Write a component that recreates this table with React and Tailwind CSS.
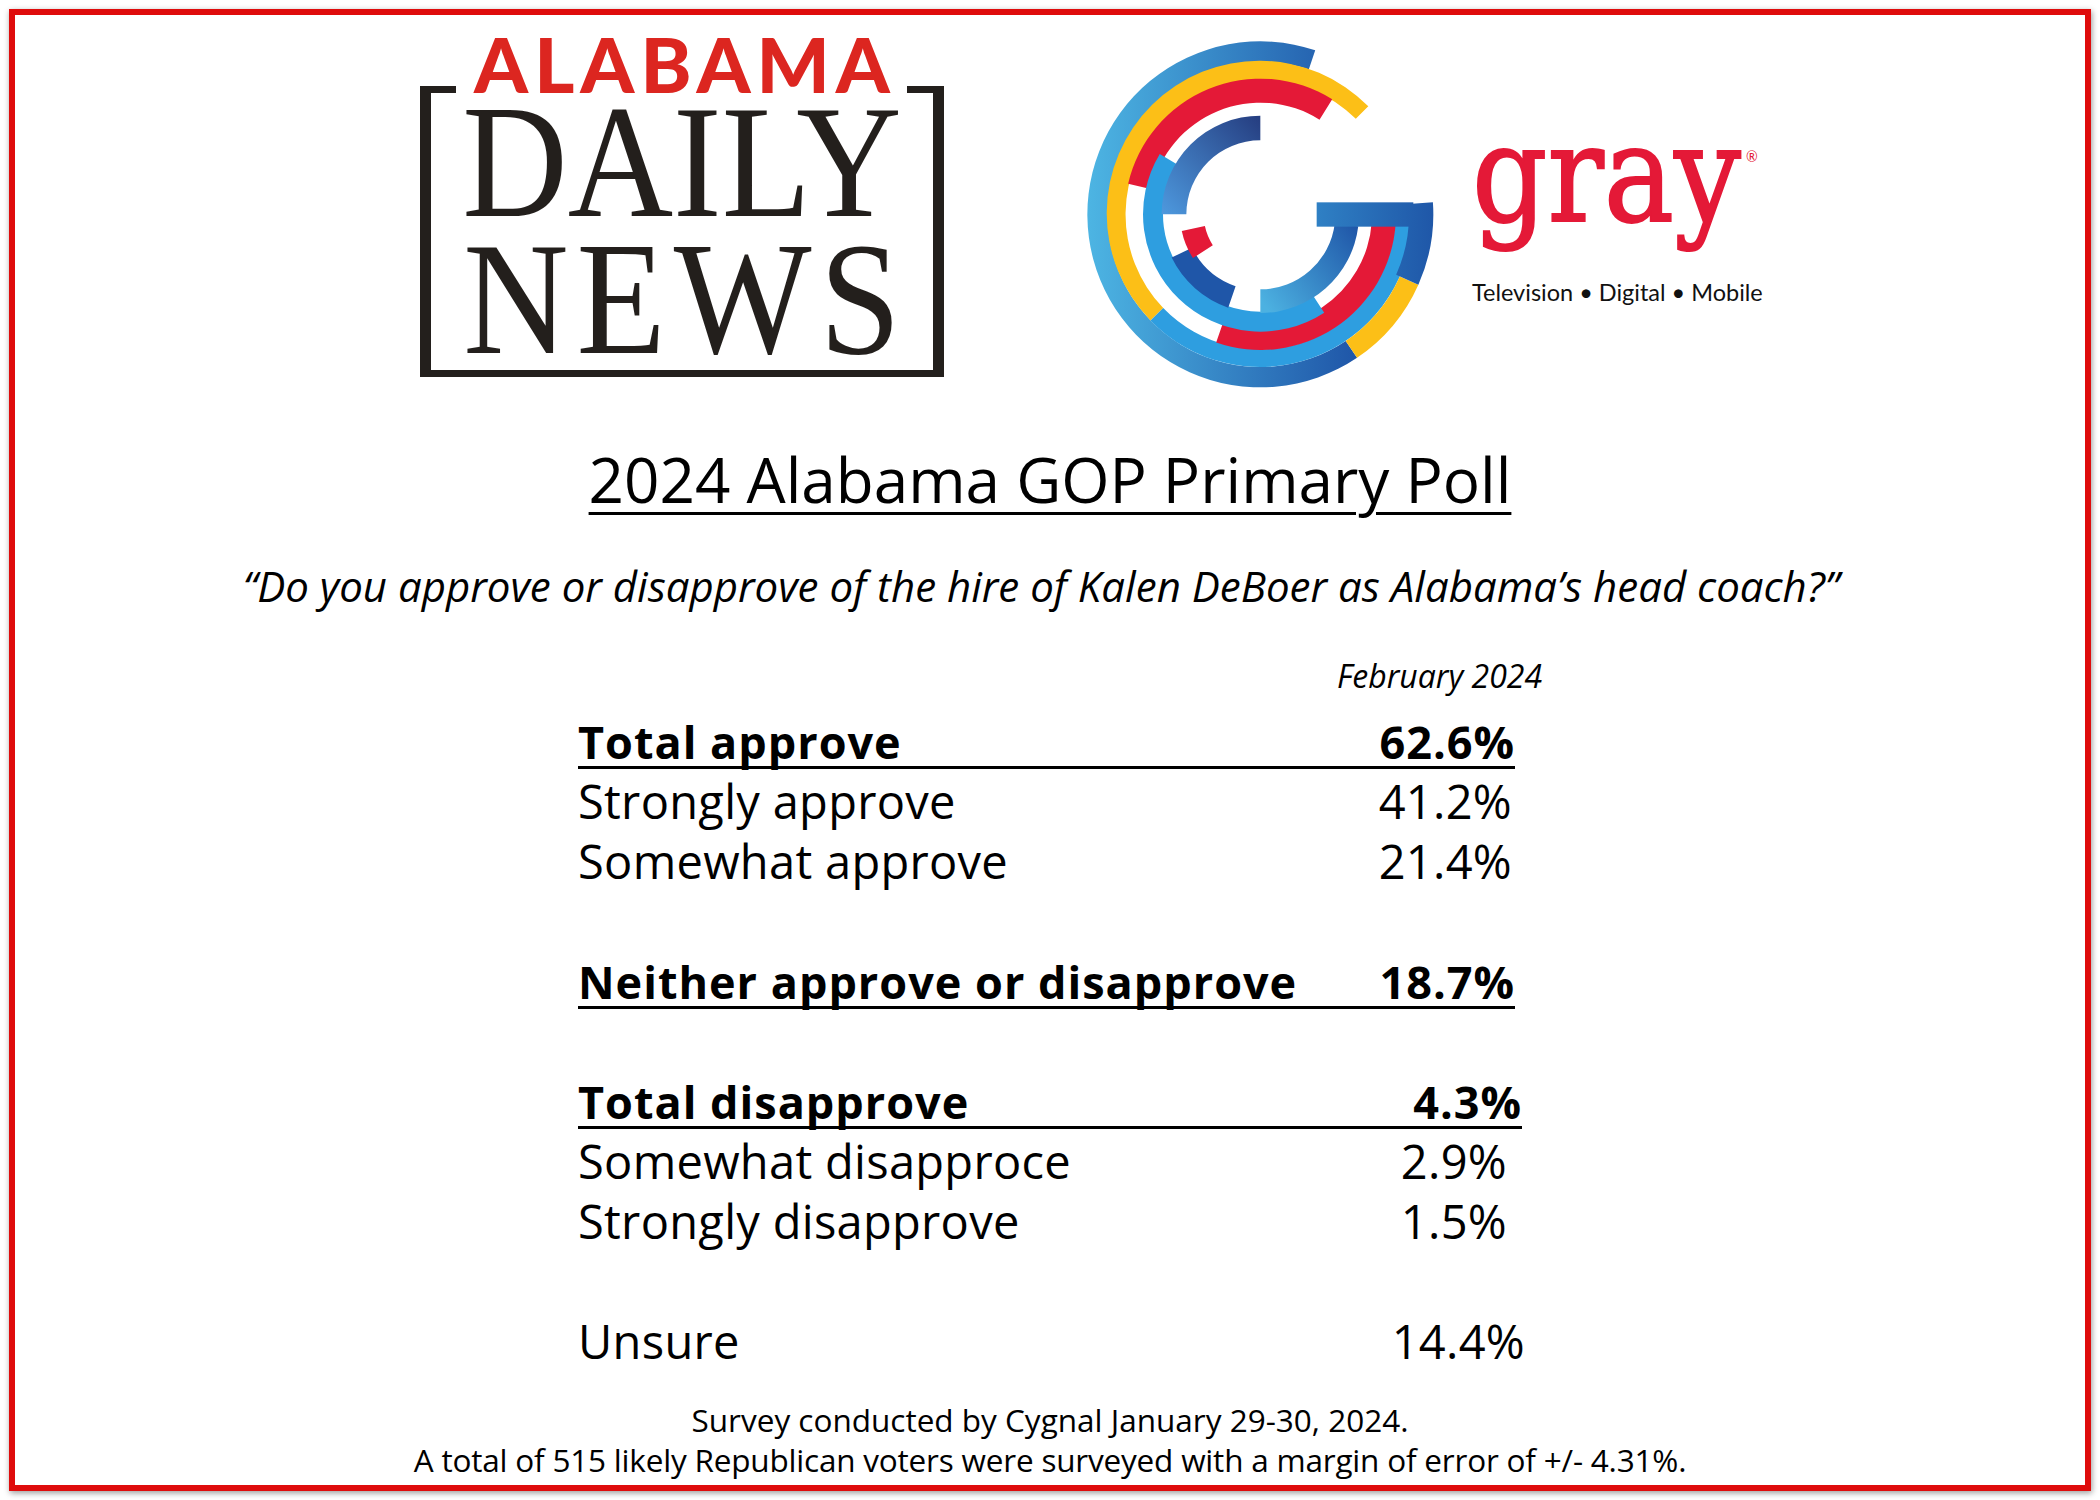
import React from "react";

const rows = [
  { label: "Total approve", value: "62.6%", bold: true, line: true, row: "", val: "" },
  { label: "Strongly approve", value: "41.2%", row: "", val: "pr-[3px]" },
  { label: "Somewhat approve", value: "21.4%", row: "", val: "pr-[3px]" },
  null,
  { label: "Neither approve or disapprove", value: "18.7%", bold: true, line: true, row: "", val: "" },
  null,
  { label: "Total disapprove", value: "4.3%", bold: true, line: true, row: "-mr-[7px]", val: "" },
  { label: "Somewhat disapproce", value: "2.9%", row: "", val: "pr-[8px]" },
  { label: "Strongly disapprove", value: "1.5%", row: "", val: "pr-[8px]" },
  null,
  { label: "Unsure", value: "14.4%", row: "", val: "-mr-[10px]" },
];

// ring segment around the centre of the G mark
const seg = (r1, r2, a1, a2) => {
  const p = (r, a) => {
    const t = (a * Math.PI) / 180;
    return `${(541 + r * Math.cos(t)).toFixed(1)} ${(541 + r * Math.sin(t)).toFixed(1)}`;
  };
  const big = a2 - a1 > 180 ? 1 : 0;
  return `M${p(r2, a1)} A${r2} ${r2} 0 ${big} 1 ${p(r2, a2)} L${p(r1, a2)} A${r1} ${r1} 0 ${big} 0 ${p(r1, a1)} Z`;
};

const GrayMark = ({ className }) => (
  <svg className={className} width="360" height="360" viewBox="0 0 1080 1080">
    <defs>
      <linearGradient id="gOuter" gradientUnits="userSpaceOnUse" x1="22" y1="541" x2="830" y2="541">
        <stop offset="0" stopColor="#4db5e3" />
        <stop offset="1" stopColor="#1f56a8" />
      </linearGradient>
      <linearGradient id="gInnerTL" gradientUnits="userSpaceOnUse" x1="250" y1="541" x2="541" y2="260">
        <stop offset="0" stopColor="#4d98dd" />
        <stop offset="1" stopColor="#263f82" />
      </linearGradient>
      <linearGradient id="gInnerBR" gradientUnits="userSpaceOnUse" x1="543" y1="800" x2="835" y2="578">
        <stop offset="0" stopColor="#4cb1e1" />
        <stop offset="1" stopColor="#1f55a7" />
      </linearGradient>
      <linearGradient id="gBar" gradientUnits="userSpaceOnUse" x1="710" y1="541" x2="1060" y2="541">
        <stop offset="0" stopColor="#2f80c4" />
        <stop offset="1" stopColor="#1f57a8" />
      </linearGradient>
    </defs>
    <path d={seg(458, 519, 56, 288.5)} fill="url(#gOuter)" />
    <path d={seg(405, 458, 136, 315)} fill="#fcbf17" />
    <path d={seg(335, 407, 193, 302)} fill="#e41937" />
    <path d={seg(405, 458, 4, 136)} fill="#2e9ee0" />
    <path d={seg(335, 407, 4, 109)} fill="#e41937" />
    <path d={seg(292, 352, 57, 211)} fill="#2e9ee0" />
    <path d={seg(222, 296, 180, 270)} fill="url(#gInnerTL)" />
    <path d={seg(225, 296, 7, 90)} fill="url(#gInnerBR)" />
    <path d={seg(228, 296, 109, 154)} fill="#1f56a8" />
    <path d={seg(170, 241, 147, 168)} fill="#e41937" />
    <path d={seg(458, 519, 24, 56)} fill="#fcbf17" />
    <path d={seg(446, 519, -4, 24)} fill="url(#gBar)" />
    <rect x="710" y="505" width="290" height="73" fill="url(#gBar)" />
  </svg>
);

const AdnLogo = () => (
  <div className="w-[524px] mt-[10px] flex flex-col text-[#231f1c]">
    <div className="text-center text-[77px] leading-[77px] -mb-[16px] tracking-[6px] pl-[6px] font-['Lato',sans-serif] font-black text-[#dc2620]">
      ALABAMA
    </div>
    <div className="flex justify-between h-[7px]">
      <div className="w-[36px] h-[7px] bg-[#231f1c]" />
      <div className="w-[37px] h-[7px] bg-[#231f1c]" />
    </div>
    <div className="border-x-[11px] border-b-[7px] border-t-0 border-[#231f1c] pt-[9px] pb-[11px] font-['Liberation_Serif',serif]">
      <div className="h-[120px] text-center text-[146px] leading-[120px] scale-y-[1.1]">DAILY</div>
      <div className="h-[120px] mt-[17px] text-center text-[146px] leading-[120px] scale-y-[1.1] tracking-[8px] pl-[8px]">
        NEWS
      </div>
    </div>
  </div>
);

const App = () => {
  return (
    <div className="w-[2100px] h-[1500px] bg-white pt-[9px] pl-[9px]">
      <div className="w-[2082px] h-[1482px] border-[6px] border-[#df0c0c] bg-white shadow-[1px_2px_6px_rgba(0,0,0,0.4)] flex flex-col font-['Open_Sans',sans-serif] text-black">
        <div className="h-[380px] flex items-start pl-[405px]">
          <AdnLogo />
          <GrayMark className="ml-[136px] mt-[19px] shrink-0" />
          <div className="ml-[32px] mt-[95px] flex flex-col">
            <div className="h-[130px] w-[300px] origin-left scale-x-[0.88] text-[134px] leading-[130px] text-[#e41937] font-['DejaVu_Serif',serif] [-webkit-text-stroke:2px_#e41937] whitespace-nowrap">
              gray
              <span className="inline-block align-top mt-[38px] ml-[6px] text-[16px] leading-none [-webkit-text-stroke:0px] font-['Lato',sans-serif]">
                ®
              </span>
            </div>
            <div className="mt-[40px] text-[23.5px] leading-[25px] font-['Lato',sans-serif] text-[#111] whitespace-nowrap">
              Television • Digital • Mobile
            </div>
          </div>
        </div>

        <h1 className="mt-[53px] text-center text-[62px] leading-[62px] underline decoration-[3px] underline-offset-[9px]">
          2024 Alabama GOP Primary Poll
        </h1>

        <p className="mt-[55px] pr-[18px] text-center italic text-[42px] leading-[42px]">
          “Do you approve or disapprove of the hire of Kalen DeBoer as Alabama’s head coach?”
        </p>

        <div className="ml-[563px] w-[937px] flex flex-col">
          <div className="mt-[53px] -mr-[27px] text-right italic text-[32px] leading-[32px]">February 2024</div>
          <div className="mt-[17px] flex flex-col">
            {rows.map((r, i) =>
              r ? (
                <div
                  key={i}
                  className={`h-[60px] flex justify-between leading-[65px] whitespace-nowrap ${
                    r.line ? "border-b-[3px] border-black" : ""
                  } ${r.bold ? "font-bold text-[45px] tracking-[1px]" : "text-[47px] tracking-[0.3px]"} ${r.row}`}
                >
                  <span>{r.label}</span>
                  <span className={r.val}>{r.value}</span>
                </div>
              ) : (
                <div key={i} className="h-[60px]" />
              )
            )}
          </div>
        </div>

        <div className="mt-[31px] text-center text-[31.5px] leading-[40px]">
          <p>Survey conducted by Cygnal January 29-30, 2024.</p>
          <p className="tracking-[-0.2px]">
            A total of 515 likely Republican voters were surveyed with a margin of error of +/- 4.31%.
          </p>
        </div>
      </div>
    </div>
  );
};

export default App;
